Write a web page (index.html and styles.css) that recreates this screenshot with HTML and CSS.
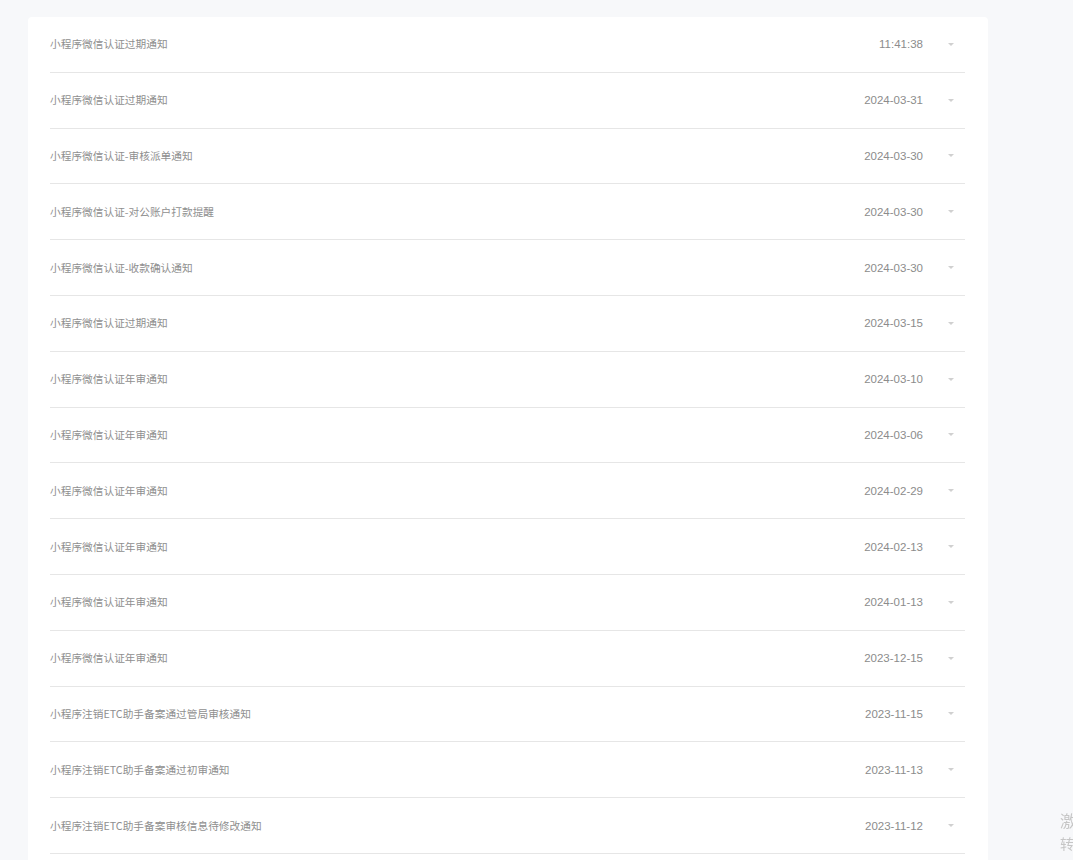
FILE: index.html
```html
<!DOCTYPE html>
<html lang="zh-CN">
<head>
<meta charset="utf-8">
<title>通知列表</title>
<link rel="stylesheet" href="styles.css">
</head>
<body>
<div class="card">
  <div class="row"><span class="title">小程序微信认证过期通知</span><span class="date">11:41:38</span><span class="caret"></span></div>
  <div class="row"><span class="title">小程序微信认证过期通知</span><span class="date">2024-03-31</span><span class="caret"></span></div>
  <div class="row"><span class="title">小程序微信认证-审核派单通知</span><span class="date">2024-03-30</span><span class="caret"></span></div>
  <div class="row"><span class="title">小程序微信认证-对公账户打款提醒</span><span class="date">2024-03-30</span><span class="caret"></span></div>
  <div class="row"><span class="title">小程序微信认证-收款确认通知</span><span class="date">2024-03-30</span><span class="caret"></span></div>
  <div class="row"><span class="title">小程序微信认证过期通知</span><span class="date">2024-03-15</span><span class="caret"></span></div>
  <div class="row"><span class="title">小程序微信认证年审通知</span><span class="date">2024-03-10</span><span class="caret"></span></div>
  <div class="row"><span class="title">小程序微信认证年审通知</span><span class="date">2024-03-06</span><span class="caret"></span></div>
  <div class="row"><span class="title">小程序微信认证年审通知</span><span class="date">2024-02-29</span><span class="caret"></span></div>
  <div class="row"><span class="title">小程序微信认证年审通知</span><span class="date">2024-02-13</span><span class="caret"></span></div>
  <div class="row"><span class="title">小程序微信认证年审通知</span><span class="date">2024-01-13</span><span class="caret"></span></div>
  <div class="row"><span class="title">小程序微信认证年审通知</span><span class="date">2023-12-15</span><span class="caret"></span></div>
  <div class="row"><span class="title">小程序注销ETC助手备案通过管局审核通知</span><span class="date">2023-11-15</span><span class="caret"></span></div>
  <div class="row"><span class="title">小程序注销ETC助手备案通过初审通知</span><span class="date">2023-11-13</span><span class="caret"></span></div>
  <div class="row"><span class="title">小程序注销ETC助手备案审核信息待修改通知</span><span class="date">2023-11-12</span><span class="caret"></span></div>
</div>
<div class="watermark">
  <div class="wm1">激活 Windows</div>
  <div class="wm2">转到“设置”以激活 Windows。</div>
</div>
</body>
</html>
```
FILE: styles.css
```css
html, body {
  margin: 0;
  padding: 0;
  background: #f7f8fa;
  overflow: hidden;
  height: 860px;
}
body {
  font-family: "Microsoft YaHei", "Noto Sans CJK SC", "Liberation Sans", sans-serif;
}
.card {
  margin: 17px 0 0 28px;
  width: 960px;
  box-sizing: border-box;
  padding: 0 23px 20px 22px;
  background: #ffffff;
  border-radius: 4px;
}
.row {
  display: flex;
  align-items: center;
  height: 55.8px;
  box-sizing: border-box;
  border-bottom: 1px solid #e6e6e6;
  font-size: 10.7px;
  color: #8f8f8f;
}
.title {
  flex: 1;
  padding-bottom: 1px;
}
.date {
  font-family: "Liberation Sans", Arial, sans-serif;
  font-size: 11.5px;
  color: #8c8c8c;
}
.caret {
  width: 0;
  height: 0;
  border-left: 3px solid transparent;
  border-right: 3px solid transparent;
  border-top: 3px solid #d0d0d0;
  margin: 0 11px 0 25px;
}
.watermark {
  position: fixed;
  left: 1060px;
  top: 808px;
  color: #c6c6c6;
  white-space: nowrap;
}
.wm1 {
  font-size: 16px;
  line-height: 24px;
}
.wm2 {
  font-size: 14px;
  line-height: 22px;
}
```
